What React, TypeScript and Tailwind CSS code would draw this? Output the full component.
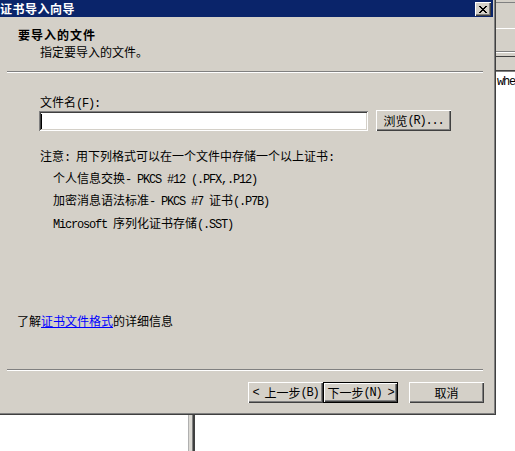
import React from "react";

const raised =
  "shadow-[inset_1px_1px_0_#ffffff,inset_-1px_-1px_0_#404040,inset_-2px_-2px_0_#808080]";
const sunken =
  "shadow-[inset_1px_1px_0_#808080,inset_-1px_-1px_0_#ffffff,inset_2px_2px_0_#404040,inset_-2px_-2px_0_#d4d0c8]";

// Renders ASCII runs as fixed 6px-wide cells next to full-width CJK glyphs
function Mixed({ text }: { text: string }) {
  const parts = text.match(/[\x00-\x7f]+|[^\x00-\x7f]+/g) ?? [];
  return (
    <>
      {parts.map((p, i) =>
        /^[\x00-\x7f]/.test(p) ? (
          <span
            key={i}
            className="font-['Liberation_Mono',monospace] tracking-[-1.2px] whitespace-pre"
          >
            {p}
          </span>
        ) : (
          <span key={i}>{p}</span>
        )
      )}
    </>
  );
}

function Line({ text, className = "" }: { text: string; className?: string }) {
  return (
    <div className={`h-[12px] leading-[12px] whitespace-nowrap ${className}`}>
      <Mixed text={text} />
    </div>
  );
}

function CloseGlyph() {
  const rows = [
    [0, 1, 6, 7],
    [1, 2, 5, 6],
    [2, 3, 4, 5],
    [3, 4],
    [2, 3, 4, 5],
    [1, 2, 5, 6],
    [0, 1, 6, 7],
  ];
  return (
    <svg width="8" height="7" viewBox="0 0 8 7" shapeRendering="crispEdges">
      {rows.flatMap((cols, y) =>
        cols.map((x) => <rect key={`${x}-${y}`} x={x} y={y} width="1" height="1" fill="#000" />)
      )}
    </svg>
  );
}

function Button({
  label,
  isDefault = false,
  className = "",
}: {
  label: string;
  isDefault?: boolean;
  className?: string;
}) {
  if (isDefault) {
    return (
      <div className={`w-[75px] h-[21px] border border-black bg-[#d4d0c8] flex ${className}`}>
        <div className={`flex-1 flex items-center justify-center leading-[12px] ${raised}`}>
          <Mixed text={label} />
        </div>
      </div>
    );
  }
  return (
    <div
      className={`w-[75px] h-[21px] bg-[#d4d0c8] flex items-center justify-center leading-[12px] ${raised} ${className}`}
    >
      <Mixed text={label} />
    </div>
  );
}

function Separator({ className = "" }: { className?: string }) {
  return (
    <div className={`ml-[7px] w-[476px] h-[2px] border-t border-t-[#808080] border-b border-b-white ${className}`} />
  );
}

function Dialog() {
  return (
    <div className="w-[496px] h-[415px] bg-[#d4d0c8] flex flex-col shadow-[inset_-1px_-1px_0_#404040,inset_-2px_-2px_0_#808080]">
      {/* title bar */}
      <div className="w-[493px] h-[17px] bg-[#0a246a] flex justify-between">
        <div className="pt-[3px] h-[12px] leading-[12px] text-white font-bold tracking-[0.5px] whitespace-nowrap">
          证书导入向导
        </div>
        <div className={`mt-[2px] mr-[2px] w-[16px] h-[14px] bg-[#d4d0c8] flex items-center justify-center ${raised}`}>
          <CloseGlyph />
        </div>
      </div>

      {/* header */}
      <div className="ml-[18px] mt-[12px] h-[12px] leading-[12px] font-bold tracking-[1px] whitespace-nowrap">
        要导入的文件
      </div>
      <Line text="指定要导入的文件。" className="ml-[40px] mt-[5px]" />
      <Separator className="mt-[13px]" />

      {/* file picker */}
      <Line text="文件名(F):" className="ml-[40px] mt-[23px]" />
      <div className="ml-[39px] mt-[2px] flex items-start">
        <div className={`mt-[1px] w-[329px] h-[20px] bg-white flex items-center pl-[2px] ${sunken}`}>
          <div className="w-[1px] h-[15px] bg-black" />
        </div>
        <Button label="浏览(R)..." className="ml-[8px]" />
      </div>

      {/* supported formats */}
      <Line text="注意: 用下列格式可以在一个文件中存储一个以上证书:" className="ml-[40px] mt-[19px]" />
      <Line text="个人信息交换- PKCS #12 (.PFX,.P12)" className="ml-[53px] mt-[10px]" />
      <Line text="加密消息语法标准- PKCS #7 证书(.P7B)" className="ml-[53px] mt-[10px]" />
      <Line text="Microsoft 序列化证书存储(.SST)" className="ml-[53px] mt-[11px]" />

      <div className="ml-[17px] mt-[86px] h-[12px] leading-[12px] whitespace-nowrap">
        了解
        <span className="text-[#0000ff] underline underline-offset-[1px]">证书文件格式</span>
        的详细信息
      </div>

      <Separator className="mt-[42px]" />

      {/* navigation */}
      <div className="ml-[248px] mt-[11px] flex">
        <Button label="< 上一步(B)" />
        <Button label="下一步(N) >" isDefault />
        <Button label="取消" className="ml-[11px]" />
      </div>
    </div>
  );
}

function SideStrip() {
  return (
    <div className="w-[19px] flex flex-col">
      <div className="h-[72px] bg-[#d4d0c8] flex flex-col">
        <div className="h-[2px]" />
        <div className="h-[1px] bg-[#808080]" />
        <div className="h-[25px]" />
        <div className="h-[1px] bg-white" />
        <div className="h-[22px]" />
        <div className="h-[1px] bg-[#808080]" />
        <div className="h-[1px] bg-white" />
        <div className="h-[3px]" />
        <div className="h-[1px] bg-[#404040]" />
        <div className="h-[13px]" />
        <div className="h-[1px] bg-[#404040]" />
        <div className="h-[1px] bg-[#808080]" />
      </div>
      <div className="flex-1 bg-white">
        <div className="mt-[4px] ml-[1px] h-[12px] leading-[12px] font-['Liberation_Mono',monospace] tracking-[-1.2px] whitespace-pre">
          whe
        </div>
      </div>
    </div>
  );
}

export default function App() {
  return (
    <div className="w-[515px] h-[451px] bg-white flex overflow-hidden font-['Noto_Sans_CJK_SC',sans-serif] text-[12px] leading-[12px] text-black">
      <div className="w-[496px] flex flex-col">
        <Dialog />
        <div className="flex-1 flex">
          <div className="ml-[188px] flex">
            <div className="w-[1px] bg-[#b0b0b0]" />
            <div className="w-[3px] bg-[#dcdad4]" />
            <div className="w-[1px] bg-[#808080]" />
            <div className="w-[2px] bg-[#404040]" />
          </div>
        </div>
      </div>
      <SideStrip />
    </div>
  );
}
